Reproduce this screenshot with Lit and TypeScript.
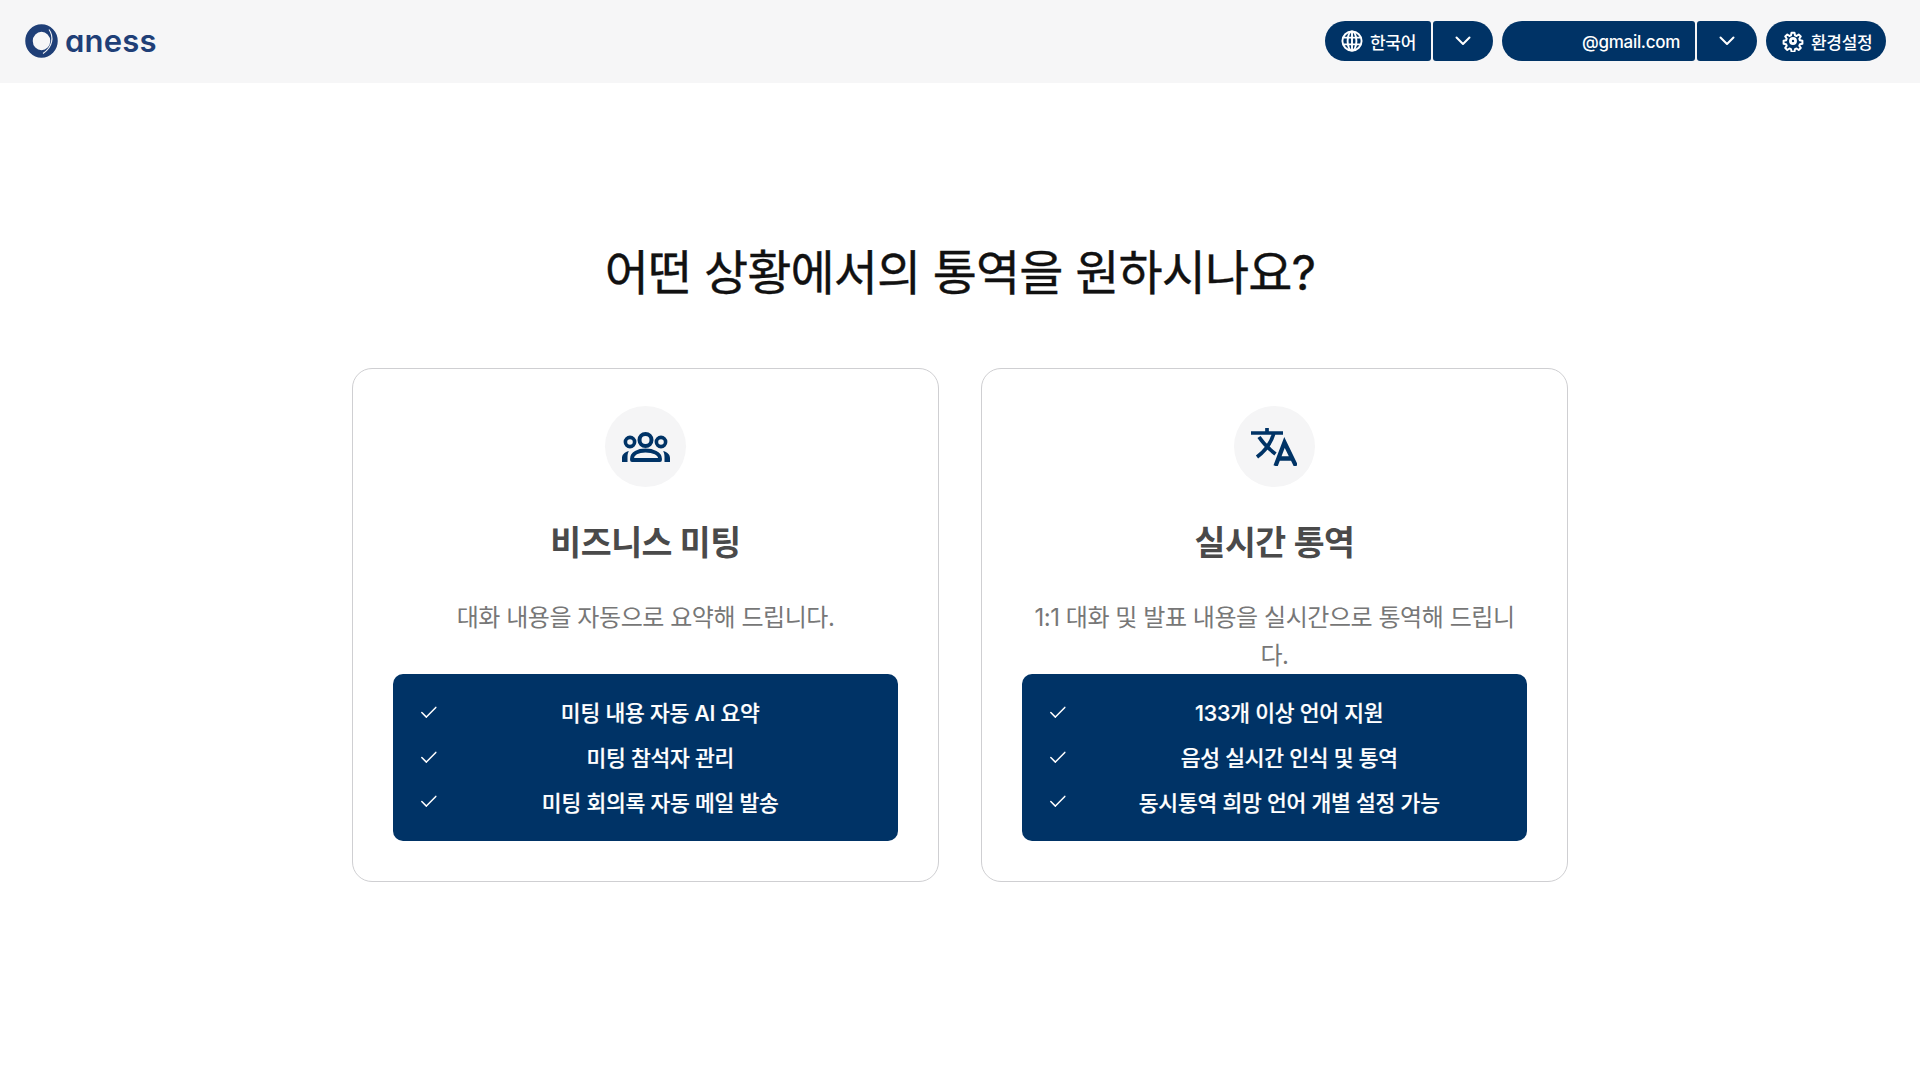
import { LitElement, html, css, svg } from "lit";
import { customElement } from "lit/decorators.js";

const chevron = svg`<svg class="chev" width="16" height="16" viewBox="0 0 16 16" fill="none" stroke="#fff" stroke-width="2" stroke-linecap="round" stroke-linejoin="round"><path d="M1.500 4.500l6.500 6.500 6.500-6.500"/></svg>`;
const check = svg`<svg class="check" width="20" height="20" viewBox="0 0 20 20" fill="none" stroke="#fff" stroke-width="1.500" stroke-linecap="round" stroke-linejoin="round"><path d="M2.800 10.500l4.600 4.600L16.800 5.400"/></svg>`;
const globe = svg`<svg width="22" height="22" viewBox="0 0 22 22" fill="none" stroke="#fff" stroke-width="1.900"><circle cx="11" cy="11" r="9.600"/><ellipse cx="11" cy="11" rx="4.400" ry="9.600"/><path d="M2.200 7.600h17.600M2.200 14.400h17.600M11 1.500v19"/></svg>`;
const gear = svg`<svg width="22" height="22" viewBox="0 0 24 24" fill="none" stroke="#fff" stroke-width="2.400" stroke-linejoin="round"><circle cx="12" cy="12" r="2.800" stroke-width="3"/><path d="M10.200 2h3.600l.6 3.100 1.900.8 2.600-1.800 2.500 2.500-1.800 2.600.8 1.900 3 .6v3.600l-3 .6-.8 1.900 1.800 2.600-2.500 2.500-2.600-1.800-1.900.8-.6 3h-3.600l-.6-3-1.900-.8-2.600 1.800-2.500-2.500 1.800-2.600-.8-1.900-3-.6v-3.600l3-.6.8-1.900-1.800-2.600 2.500-2.500 2.600 1.800 1.900-.8z" transform="translate(1.200 1.200) scale(.9)"/></svg>`;
const people = svg`<svg width="48" height="31" viewBox="0 0 48 31" fill="none"><circle cx="23.500" cy="9" r="6" stroke="#003366" stroke-width="4"/><circle cx="8" cy="11" r="4.600" stroke="#003366" stroke-width="3.600"/><circle cx="39" cy="11" r="4.600" stroke="#003366" stroke-width="3.600"/><path d="M10 29v-1.500c0-5 6-8 13.500-8s14.500 3 14.500 8V29z" stroke="#003366" stroke-width="3.800" stroke-linejoin="round"/><path d="M0 31v-4c0-3 2-5.500 6.800-7-.9 1.800-1.300 3.800-1.300 6v5zM48 31v-4c0-3-2-5.500-6.800-7 .9 1.800 1.300 3.800 1.300 6v5z" fill="#003366"/></svg>`;
const translate = svg`<svg class="tr" width="46" height="38" viewBox="0 0 46 38" fill="none" stroke="#003366" stroke-width="3.700"><path d="M0 5h32M16 0v5M23 5C20 15 14 23 6 29M8 9c4 6 10 12 16.500 17"/><path d="M24.500 38L33.500 14.500 45 38M27.500 30.500h14.500" stroke-width="4.300"/></svg>`;

const cards = [
  { icon: people, title: "비즈니스 미팅", desc: "대화 내용을 자동으로 요약해 드립니다.", items: ["미팅 내용 자동 AI 요약", "미팅 참석자 관리", "미팅 회의록 자동 메일 발송"] },
  { icon: translate, title: "실시간 통역", desc: "1:1 대화 및 발표 내용을 실시간으로 통역해 드립니다.", items: ["133개 이상 언어 지원", "음성 실시간 인식 및 통역", "동시통역 희망 언어 개별 설정 가능"] },
];

@customElement("app-root")
export class AppRoot extends LitElement {
  static styles = css`
    :host { display: block; min-height: 1080px; background: #fff; color: #111; font-family: Inter, "Noto Sans CJK KR", sans-serif; }
    header { height: 83px; background: #f6f6f7; display: flex; align-items: center; justify-content: space-between; padding: 0 34px 1px 25px; box-sizing: border-box; }
    .logo { display: flex; align-items: center; gap: 7px; color: #1f3f77; font-size: 31px; line-height: 1; font-weight: 600; font-feature-settings: "cv11"; letter-spacing: 0.2px; }
    .logo span { position: relative; top: -1px; }
    .actions { display: flex; align-items: center; gap: 9px; }
    .group { display: flex; gap: 2px; }
    .btn { height: 40px; background: #003366; color: #fff; display: flex; align-items: center; gap: 7px; box-sizing: border-box; font-size: 17px; font-weight: 500; letter-spacing: -0.3px; border-radius: 20px; white-space: nowrap; }
    .left { border-radius: 20px 3px 3px 20px; }
    .right { border-radius: 3px 20px 20px 3px; width: 60px; justify-content: center; }
    .lang { width: 106px; padding-left: 16px; }
    .mail { width: 193px; padding-right: 15px; justify-content: flex-end; }
    .mail span { padding-top: 1px; }
    .settings { width: 120px; padding-left: 16px; }
    main { display: flex; flex-direction: column; align-items: center; }
    h1 { margin: 161px 0 0; height: 60px; font-size: 48px; line-height: 58px; font-weight: 400; letter-spacing: -0.9px; -webkit-text-stroke: 0.35px #111; }
    .cards { display: flex; gap: 42px; margin-top: 64px; }
    .card { width: 587px; height: 514px; box-sizing: border-box; border: 1px solid #cfcfd2; border-radius: 20px; padding: 37px 40px 0; display: flex; flex-direction: column; align-items: center; }
    .card > * { flex: none; }
    .circle { width: 81px; height: 81px; border-radius: 50%; background: #f5f5f6; display: flex; align-items: center; justify-content: center; }
    .tr { margin-right: 2px; }
    h2 { margin: 33px 0 0; font-size: 33.600px; line-height: 46px; font-weight: 600; color: #4a4a4a; letter-spacing: -0.5px; }
    p { margin: 33px 0 0; width: 100%; height: 75px; font-size: 24px; line-height: 38px; color: #777; text-align: center; letter-spacing: -0.45px; word-break: break-all; }
    ul { list-style: none; margin: 0; padding: 15px 26px 17px 25.500px; box-sizing: border-box; width: 100%; height: 167px; background: #003366; border-radius: 10px; color: #fff; display: flex; flex-direction: column; justify-content: center; }
    li { height: 44.700px; flex: none; display: flex; align-items: center; font-size: 21.500px; font-weight: 500; letter-spacing: -0.25px; -webkit-text-stroke: 0.2px #fff; }
    li span { flex: 1; text-align: center; margin-left: 10px; }
    .check { flex: none; }
  `;
  render() {
    return html`
      <header>
        <div class="logo">
          <svg width="33" height="34" viewBox="0 0 33 34" fill="none"><ellipse cx="16.500" cy="17" rx="12.500" ry="13" stroke="#1f3f77" stroke-width="7.500"/><path d="M24 5.500c5 7 4 17.500-6 24" stroke="#f6f6f7" stroke-width="1.100" fill="none"/></svg>
          <span>aness</span>
        </div>
        <div class="actions">
          <div class="group">
            <div class="btn left lang">${globe}<span>한국어</span></div>
            <div class="btn right">${chevron}</div>
          </div>
          <div class="group">
            <div class="btn left mail"><span>@gmail.com</span></div>
            <div class="btn right">${chevron}</div>
          </div>
          <div class="btn settings">${gear}<span>환경설정</span></div>
        </div>
      </header>
      <main>
        <h1>어떤 상황에서의 통역을 원하시나요?</h1>
        <div class="cards">
          ${cards.map((c) => html`
            <section class="card">
              <div class="circle">${c.icon}</div>
              <h2>${c.title}</h2>
              <p>${c.desc}</p>
              <ul>${c.items.map((i) => html`<li>${check}<span>${i}</span></li>`)}</ul>
            </section>`)}
        </div>
      </main>
    `;
  }
}
